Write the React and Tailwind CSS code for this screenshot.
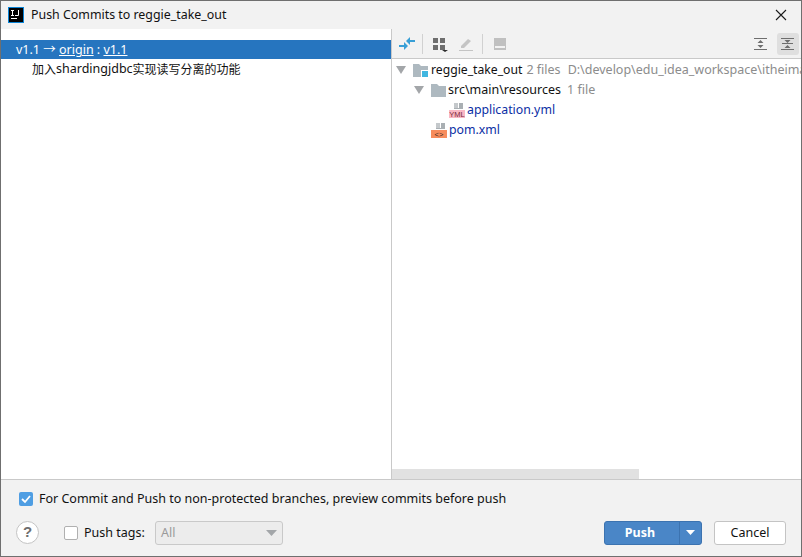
import React from "react";

function FileIcon({ bg, label, labelClass }) {
  return (
    <svg width="17" height="17" viewBox="0 0 17 17" className="shrink-0">
      <path d="M5 1h4v5H5z" fill="#c4c8cb" />
      <path d="M10 1h4v6H5V6h5z" fill="#a9afb3" />
      <rect x="0" y="8" width="16" height="8" fill={bg} />
      <text x="8" y="15" textAnchor="middle" fontSize="7.500" fontFamily="Liberation Sans" className={labelClass}>{label}</text>
    </svg>
  );
}

function Folder({ badge }) {
  return (
    <svg width="17" height="16" viewBox="0 0 17 16" className="shrink-0">
      <path d="M1 2h6l2 2h7v11H1z" fill="#aeb9c0" />
      {badge && <rect x="9.500" y="8.500" width="7" height="7" fill="#40b6e0" stroke="#fff" strokeWidth="1" />}
    </svg>
  );
}

function Arrow() {
  return (
    <svg width="12" height="10" viewBox="0 0 12 10" className="shrink-0">
      <path d="M1 1h10L6 9z" fill="#a3a6a9" />
    </svg>
  );
}

export default function App() {
  return (
    <div className="w-[802px] h-[557px] bg-[#f2f2f2] border border-[#6f6f6f] flex flex-col overflow-hidden text-[12.5px] text-[#111] font-['Noto_Sans','Noto_Sans_CJK_SC',sans-serif]">
      {/* titulo */}
      <div className="h-[28px] flex items-center pl-[7px] pr-[14px] shrink-0">
        <svg width="16" height="16" viewBox="0 0 16 16" className="shrink-0">
          <rect width="16" height="16" fill="#0a84d6" />
          <rect x="1" y="1" width="14" height="14" fill="#000" />
          <rect x="3" y="11" width="6" height="1" fill="#fff" />
          <path d="M3 3h3v1H5v4h1v1H3V8h1V4H3z M10 3h1v5q0 1-1 1H7V8h3z" fill="#fff" />
        </svg>
        <span className="ml-[7px] leading-none text-[12.4px]">Push Commits to reggie_take_out</span>
        <svg width="12" height="12" viewBox="0 0 12 12" className="ml-auto">
          <path d="M1 1l10 10M11 1L1 11" stroke="#1a1a1a" strokeWidth="1.1" />
        </svg>
      </div>

      <div className="flex-1 flex min-h-0">
        {/* commits */}
        <div className="w-[390px] bg-white pt-[11px] shrink-0">
          <div className="h-[19px] bg-[#2675bf] text-white flex items-center pl-[15px] pt-[2px] leading-none">
            <span>v1.1 → <span className="underline">origin</span> : <span className="underline">v1.1</span></span>
          </div>
          <div className="h-[19px] flex items-center pl-[31px] pt-[2px] leading-none text-[12px]">加入<span className="text-[12.5px]">shardingjdbc</span>实现读写分离的功能</div>
        </div>

        {/* cambios */}
        <div className="flex-1 flex flex-col min-w-0 border-l border-[#c9c9c9]">
          <div className="h-[30px] shrink-0 flex items-center pl-[7px] pr-[2px] border-b border-[#c9c9c9]">
            <svg width="16" height="16" viewBox="0 0 16 16">
              <path d="M0 11h5V8l4 4-4 4v-3H0z" fill="#389fd6" transform="translate(0 -2)" />
              <path d="M16 5h-5V2L7 6l4 4V7h5z" fill="#389fd6" transform="translate(0 -1)" />
            </svg>
            <div className="w-px h-[20px] bg-[#d1d1d1] ml-[7px] mr-[9px]" />
            <svg width="16" height="16" viewBox="0 0 16 16">
              <path d="M1 2h5v5H1z M8 2h5v5H8z M1 9h5v5H1z M8 9h5v5H8z" fill="#6e6e6e" />
              <path d="M10 14h6l-3 2z" fill="#2b2b2b" />
            </svg>
            <svg width="16" height="16" viewBox="0 0 16 16" className="ml-[10px]">
              <path d="M3 10l7-7 3 2-7 7H3z" fill="#c4c4c4" />
              <rect x="1" y="14" width="14" height="1" fill="#c4c4c4" />
            </svg>
            <div className="w-px h-[20px] bg-[#d1d1d1] ml-[8px] mr-[10px]" />
            <svg width="14" height="14" viewBox="0 0 14 14">
              <path d="M1 1h12v12H1z" fill="#c0c0c0" />
              <rect x="2" y="9" width="10" height="2" fill="#f2f2f2" />
            </svg>
            <svg width="14" height="14" viewBox="0 0 14 14" className="ml-auto mr-[9px]">
              <path d="M0 1h13v1H0z M0 12h13v1H0z" fill="#6e6e6e" />
              <path d="M6.500 3l3 3h-6z M6.500 11l3-3h-6z" fill="#6e6e6e" />
            </svg>
            <div className="w-[22px] h-[22px] rounded-[3px] bg-[#dfdfdf] flex items-center justify-center">
              <svg width="14" height="14" viewBox="0 0 14 14">
                <path d="M0 1h13v1H0z M0 12h13v1H0z M1 6h11v1H1z" fill="#6e6e6e" />
                <path d="M6.500 6l-3-3h6z M6.500 8l3 3h-6z" fill="#6e6e6e" />
              </svg>
            </div>
          </div>

          <div className="flex-1 bg-white min-h-0 relative overflow-hidden whitespace-nowrap leading-none pt-[1px]">
            <div className="h-[20px] flex items-center pl-[3px]">
              <Arrow />
              <span className="ml-[5px]"><Folder badge /></span>
              <span className="ml-[2px] text-[12.2px]">reggie_take_out</span>
              <span className="ml-[4px] text-[#8c8c8c]">2 files</span>
              <span className="ml-[7px] text-[#8c8c8c]">D:\develop\edu_idea_workspace\itheima</span>
            </div>
            <div className="h-[20px] flex items-center pl-[21px]">
              <Arrow />
              <span className="ml-[5px]"><Folder /></span>
              <span className="ml-[1px]">src\main\resources</span>
              <span className="ml-[6px] text-[#8c8c8c]">1 file</span>
            </div>
            <div className="h-[20px] flex items-center pl-[57px]">
              <FileIcon bg="#f9b7c4" label="YML" labelClass="fill-[#7a2b3a]" />
              <span className="ml-[1px] text-[#0a2ea4] text-[12.3px]">application.yml</span>
            </div>
            <div className="h-[20px] flex items-center pl-[39px]">
              <FileIcon bg="#f78c5c" label="<>" labelClass="fill-[#3b2a20]" />
              <span className="ml-[1px] text-[#0a2ea4] text-[12.3px]">pom.xml</span>
            </div>
            {/* scrollbar */}
            <div className="absolute left-0 bottom-0 w-[247px] h-[10px] bg-[#e1e1e1]" />
          </div>
        </div>
      </div>

      {/* pie */}
      <div className="h-[77px] shrink-0 border-t border-[#c9c9c9] pl-[18px] pr-[15px] pt-[9px]">
        <div className="flex items-center h-[20px]">
          <span className="w-[14px] h-[14px] rounded-[2px] bg-[#4f9ee3] flex items-center justify-center">
            <svg width="10" height="10" viewBox="0 0 10 10"><path d="M1 5l3 3 5-6" stroke="#fff" strokeWidth="1.8" fill="none" /></svg>
          </span>
          <span className="ml-[6px] leading-none">For Commit and Push to non-protected branches, preview commits before push</span>
        </div>
        <div className="flex items-center mt-[11px] h-[25px] -ml-[3px]">
          <span className="w-[23px] h-[23px] rounded-full bg-white border border-[#c4c4c4] flex items-center justify-center text-[15px] font-bold text-[#6e6e6e] font-['Liberation_Sans']">?</span>
          <span className="ml-[25px] w-[14px] h-[14px] rounded-[2px] bg-white border border-[#b0b0b0]" />
          <span className="ml-[6px] pt-[1px] leading-none w-[59px] whitespace-nowrap">Push tags:</span>
          <div className="ml-[12px] w-[128px] h-[24px] rounded-[3px] border border-[#c9c9c9] bg-[#ececec] flex items-center justify-between pl-[5px] pr-[5px] text-[#9a9a9a] leading-none">
            <span className="pt-[1px]">All</span>
            <svg width="11" height="6" viewBox="0 0 11 6"><path d="M0 0h11L5.500 6z" fill="#a3a6a9" /></svg>
          </div>
          <div className="ml-auto flex h-[24px] w-[98px] rounded-[3px] bg-[#4a86c7] border border-[#3c73b0] text-white">
            <div className="flex-1 flex items-center justify-center font-bold leading-none pr-[4px] pt-[1px]">Push</div>
            <div className="w-[22px] border-l border-[#3c73b0] flex items-center justify-center">
              <svg width="9" height="5" viewBox="0 0 9 5"><path d="M0 0h9L4.500 5z" fill="#fff" /></svg>
            </div>
          </div>
          <div className="ml-[12px] w-[72px] h-[24px] rounded-[3px] bg-white border border-[#c4c4c4] flex items-center justify-center leading-none pt-[1px]">Cancel</div>
        </div>
      </div>
    </div>
  );
}
